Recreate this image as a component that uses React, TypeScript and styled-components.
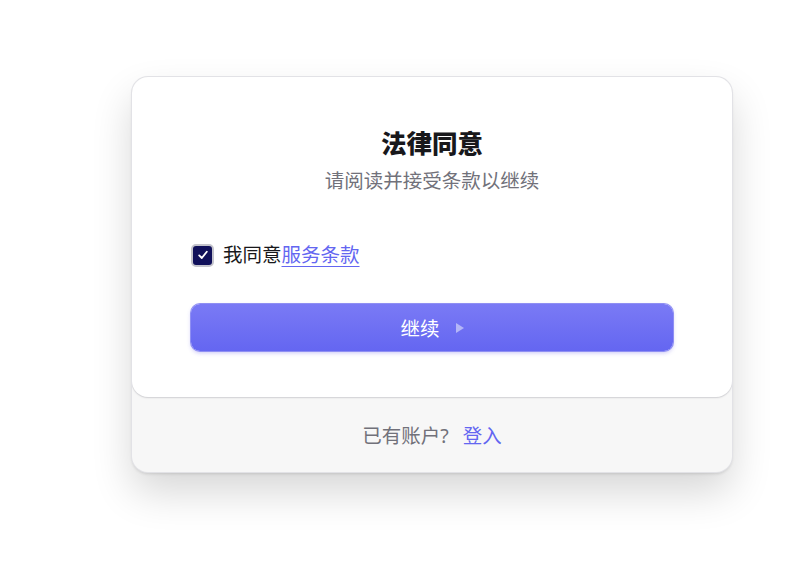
import styled, { createGlobalStyle } from "styled-components";

const GlobalStyle = createGlobalStyle`
  html, body {
    margin: 0;
    padding: 0;
    background: #ffffff;
    font-family: "Noto Sans", "Noto Sans CJK SC", sans-serif;
  }
`;

const Page = styled.div`
  min-height: 100vh;
  box-sizing: border-box;
  padding: 77px 0 0 132px;
`;

const Card = styled.div`
  width: 600px;
  background: #f7f7f7;
  border-radius: 16px;
  box-shadow: 0 0 0 1px #e2e2e6, 0 2px 3px rgba(0, 0, 0, 0.12),
    0 20px 40px rgba(0, 0, 0, 0.16);
  overflow: hidden;
`;

const Body = styled.div`
  background: #ffffff;
  border-radius: 16px;
  box-shadow: 0 1px 2px rgba(0, 0, 0, 0.12), 0 0 0 1px #ececef;
  padding: 49px 59px 46px;
  display: flex;
  flex-direction: column;
`;

const Title = styled.h1`
  margin: 0;
  text-align: center;
  font-size: 25.5px;
  line-height: 34px;
  font-weight: 800;
  color: #18181b;
`;

const Subtitle = styled.p`
  margin: 7px 0 0;
  text-align: center;
  font-size: 19.5px;
  line-height: 28px;
  color: #71717a;
`;

const CheckRow = styled.label`
  margin-top: 46px;
  display: flex;
  align-items: center;
  gap: 9px;
  font-size: 19.5px;
  line-height: 28px;
  color: #18181b;
`;

const Box = styled.span`
  width: 19px;
  height: 19px;
  border-radius: 5px;
  background: #10105a;
  border: 2px solid #c4c4cc;
  display: flex;
  align-items: center;
  justify-content: center;
`;

const TermsLink = styled.a`
  color: #6366f1;
  text-decoration: underline;
  text-underline-offset: 4px;
  text-decoration-thickness: 1px;
`;

const Button = styled.button`
  margin-top: 35px;
  height: 47px;
  border: none;
  border-radius: 9px;
  background: linear-gradient(180deg, #7a7af5 0%, #6466f1 100%);
  box-shadow: 0 0 0 1px #8f8ff3, 0 2px 4px rgba(79, 70, 229, 0.3);
  color: #ffffff;
  font-family: inherit;
  font-size: 19.5px;
  display: flex;
  align-items: center;
  justify-content: center;
  gap: 16px;
`;

const Footer = styled.div`
  height: 75px;
  display: flex;
  align-items: center;
  justify-content: center;
  gap: 14px;
  font-size: 19.5px;
  color: #71717a;
`;

const FooterLink = styled.a`
  color: #6366f1;
`;

export default function App() {
  return (
    <>
      <GlobalStyle />
      <Page>
        <Card>
          <Body>
            <Title>法律同意</Title>
            <Subtitle>请阅读并接受条款以继续</Subtitle>
            <CheckRow>
              <Box>
                <svg width="12" height="12" viewBox="0 0 12 12">
                  <path d="M2.2 6.4 L4.8 9 L9.8 2.8" fill="none" stroke="#fff" strokeWidth="1.8" strokeLinecap="round" strokeLinejoin="round" />
                </svg>
              </Box>
              <span>
                我同意<TermsLink>服务条款</TermsLink>
              </span>
            </CheckRow>
            <Button>
              继续
              <svg width="8" height="10" viewBox="0 0 8 10">
                <path d="M0 0 L8 5 L0 10 Z" fill="#b4b6f7" />
              </svg>
            </Button>
          </Body>
          <Footer>
            <span>已有账户?</span>
            <FooterLink>登入</FooterLink>
          </Footer>
        </Card>
      </Page>
    </>
  );
}
